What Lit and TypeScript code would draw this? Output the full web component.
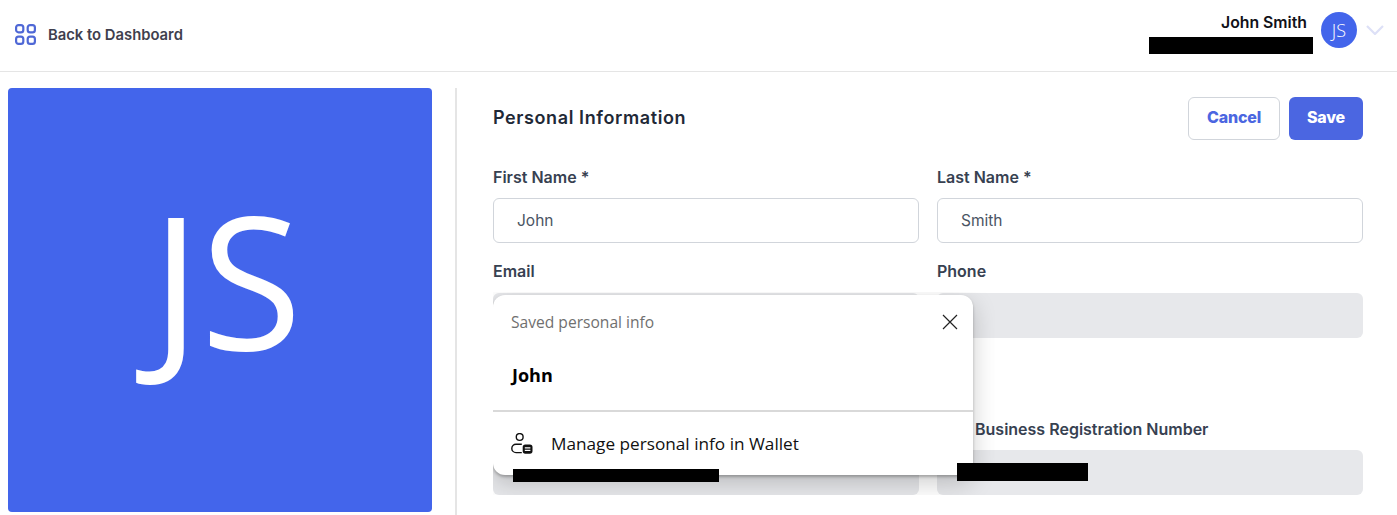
import { LitElement, html, css } from "lit";
import { customElement } from "lit/decorators.js";

@customElement("app-root")
export class AppRoot extends LitElement {
  static styles = css`
    :host { display: block; height: 515px; overflow: hidden; background: #fff; font-family: Inter, "Liberation Sans", sans-serif; color: #374151; }
    .top { height: 71px; border-bottom: 1px solid #e5e5e5; display: flex; align-items: flex-start; justify-content: space-between; padding: 0 13px 0 15px; }
    .back { display: flex; align-items: center; gap: 12px; font-size: 14.8px; font-weight: 600; color: #3f3f4e; margin-top: 24px; height: 21px; }
    .back svg { display: block; }
    .user { display: flex; align-items: flex-start; margin-top: 12px; }
    .who { display: flex; flex-direction: column; align-items: flex-end; margin-right: 14px; margin-top: 2px; }
    .who b { font-size: 15.8px; font-weight: 600; color: #111118; line-height: 18px; }
    .who i { display: block; width: 164px; height: 17px; background: #000; margin-top: 5px; margin-right: -6px; }
    .circle { width: 36px; height: 36px; border-radius: 50%; background: #4365eb; color: #fff; display: flex; align-items: center; justify-content: center; font: 300 18px "Open Sans", sans-serif; margin-right: 9px; }
    .user svg { display: block; margin-top: 13px; }
    .main { display: flex; align-items: flex-start; padding: 16px 34px 0 8px; }
    .photo { width: 424px; height: 424px; flex: none; border-radius: 4px; background: #4365eb; color: #fff; display: flex; align-items: center; justify-content: center; box-sizing: border-box; padding: 0 0 44px 13px; font: 400 185px/1 "Open Sans", sans-serif; }
    .form-wrap { flex: 1; margin-left: 23px; border-left: 2px solid #e5e5e5; padding-left: 36px; height: 427px; position: relative; }
    .head { display: flex; justify-content: space-between; align-items: flex-start; padding-top: 9px; height: 80px; box-sizing: border-box; }
    h2 { margin: 10px 0 0; font-size: 18px; line-height: 22px; font-weight: 600; letter-spacing: .6px; color: #1f2937; }
    .btns { display: flex; gap: 9px; }
    .btn { height: 43px; border-radius: 6px; box-sizing: border-box; display: flex; align-items: center; justify-content: center; padding-bottom: 3px; font-size: 16px; font-weight: 800; letter-spacing: -.2px; }
    .cancel { width: 92px; background: #fff; border: 1px solid #d1d5db; color: #4b66e1; }
    .save { width: 74px; background: #4b66e1; color: #fff; }
    .grid { display: grid; grid-template-columns: 426px 426px; column-gap: 18px; row-gap: 20px; }
    .field { display: flex; flex-direction: column; }
    .field label { min-height: 18px; font-size: 16px; font-weight: 600; line-height: 18px; color: #374151; margin-bottom: 12px; white-space: nowrap; }
    .field label.up { margin-top: -1px; margin-bottom: 13px; }
    .field label.inset { padding-left: 38px; }
    .input { height: 45px; box-sizing: border-box; border-radius: 6px; display: flex; align-items: center; padding-left: 24px; font-size: 15.5px; color: #4b5563; padding-bottom: 1px; }
    .edit { background: #fff; border: 1px solid #d1d5db; padding-left: 23px; }
    .off { background: #e7e8eb; padding-left: 20px; }
    .gap { height: 42px; grid-column: 1 / 3; }
    .redact { display: block; background: #000; }
    .r1 { width: 206px; height: 13px; margin-top: 6px; position: relative; z-index: 3; }
    .r2 { width: 131px; height: 18px; margin-top: -1px; position: relative; z-index: 3; }
    .pop { position: absolute; left: 36px; top: 207px; width: 480px; height: 180px; box-sizing: border-box; background: #fff; border-radius: 12px; box-shadow: 0 2px 3px rgba(0,0,0,.25), 0 8px 24px rgba(0,0,0,.2); clip-path: inset(-3px -22px -20px 0); z-index: 2; font-family: "Open Sans", "Noto Sans", sans-serif; display: flex; flex-direction: column; }
    .pop-head { height: 54px; display: flex; align-items: center; justify-content: space-between; padding: 0 15px 0 18px; font-size: 15.6px; color: #707070; }
    .pop-head svg { display: block; }
    .pop-name { height: 61px; box-sizing: border-box; padding: 0 0 10px 19px; display: flex; align-items: center; font-size: 18px; font-weight: 700; color: #000; }
    .pop-foot { flex: 1; border-top: 2px solid #d9d9d9; display: flex; align-items: center; padding: 0 0 0 18px; gap: 17px; font-size: 17.2px; color: #111; }
    .pop-foot svg { display: block; }
  `;

  render() {
    return html`
      <div class="top">
        <div class="back">
          <svg width="21" height="21" viewBox="0 0 21 21" fill="none" stroke="#4f68d6" stroke-width="2.2">
            <rect x="1.1" y="1.1" width="7.2" height="7.2" rx="2.4"></rect>
            <rect x="12.7" y="1.1" width="7.2" height="7.2" rx="2.4"></rect>
            <rect x="1.1" y="12.7" width="7.2" height="7.2" rx="2.4"></rect>
            <rect x="12.7" y="12.7" width="7.2" height="7.2" rx="2.4"></rect>
          </svg>
          <span>Back to Dashboard</span>
        </div>
        <div class="user">
          <div class="who"><b>John Smith</b><i></i></div>
          <div class="circle">JS</div>
          <svg width="18" height="10" viewBox="0 0 18 10" fill="none" stroke="#dde0f7" stroke-width="2.2"><path d="M1 1l8 8 8-8"></path></svg>
        </div>
      </div>
      <div class="main">
        <div class="photo">JS</div>
        <div class="form-wrap">
          <div class="head">
            <h2>Personal Information</h2>
            <div class="btns">
              <div class="btn cancel">Cancel</div>
              <div class="btn save">Save</div>
            </div>
          </div>
          <div class="grid">
            <div class="field"><label>First Name *</label><div class="input edit">John</div></div>
            <div class="field"><label>Last Name *</label><div class="input edit">Smith</div></div>
            <div class="field"><label class="up">Email</label><div class="input off"></div></div>
            <div class="field"><label class="up">Phone</label><div class="input off"></div></div>
            <div class="gap"></div>
            <div class="field"><label></label><div class="input off"><span class="redact r1"></span></div></div>
            <div class="field"><label class="inset">Business Registration Number</label><div class="input off"><span class="redact r2"></span></div></div>
          </div>
          <div class="pop">
            <div class="pop-head">
              <span>Saved personal info</span>
              <svg width="16" height="16" viewBox="0 0 16 16" fill="none" stroke="#222" stroke-width="1.2"><path d="M1 1l14 14M15 1L1 15"></path></svg>
            </div>
            <div class="pop-name">John</div>
            <div class="pop-foot">
              <svg width="23" height="22" viewBox="0 0 23 22" fill="none">
                <circle cx="8.7" cy="4" r="3.4" stroke="#111" stroke-width="1.4"></circle>
                <path d="M10.8 11.2H5a4.2 4.2 0 0 0 0 8.4h5.8" stroke="#111" stroke-width="1.4"></path>
                <rect x="11.7" y="11.5" width="9.8" height="9.2" rx="2.6" fill="#111"></rect>
                <path d="M13.8 14.9h5.6M13.8 17.4h5.6" stroke="#fff" stroke-width="1.1"></path>
              </svg>
              <span>Manage personal info in Wallet</span>
            </div>
          </div>
        </div>
      </div>
    `;
  }
}
